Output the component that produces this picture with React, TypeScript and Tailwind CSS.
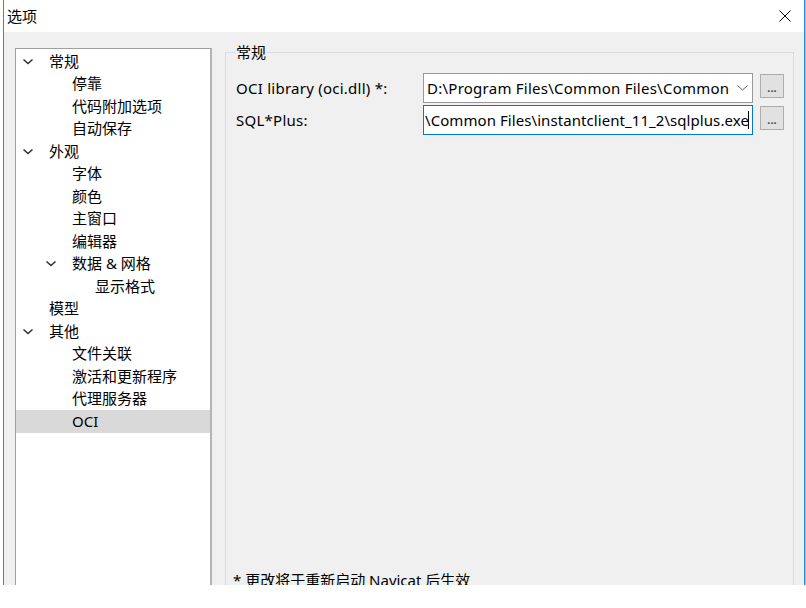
import React from "react";

type Item = { t: string; l: 0 | 1 | 2; c?: boolean; sel?: boolean };

const items: Item[] = [
  { t: "常规", l: 0, c: true },
  { t: "停靠", l: 1 },
  { t: "代码附加选项", l: 1 },
  { t: "自动保存", l: 1 },
  { t: "外观", l: 0, c: true },
  { t: "字体", l: 1 },
  { t: "颜色", l: 1 },
  { t: "主窗口", l: 1 },
  { t: "编辑器", l: 1 },
  { t: "数据 & 网格", l: 1, c: true },
  { t: "显示格式", l: 2 },
  { t: "模型", l: 0 },
  { t: "其他", l: 0, c: true },
  { t: "文件关联", l: 1 },
  { t: "激活和更新程序", l: 1 },
  { t: "代理服务器", l: 1 },
  { t: "OCI", l: 1, sel: true },
];

const pads = ["pl-[6px]", "pl-[29px]", "pl-[52px]"];

function Chevron() {
  return (
    <svg width="12" height="7" viewBox="0 0 12 7" className="block">
      <path d="M1.5 1.5 L6 5.5 L10.5 1.5" fill="none" stroke="#333" strokeWidth="1.6" />
    </svg>
  );
}

function DotsButton() {
  return (
    <div className="mt-px ml-[7px] flex h-[24px] w-[24px] items-end justify-center border border-[#adadad] bg-[#e1e1e1] pb-[4px] text-[11px] font-bold leading-none text-[#444]">
      ...
    </div>
  );
}

export default function App() {
  return (
    <div className="relative h-[608px] w-[806px] overflow-hidden bg-white font-['Noto_Sans','Noto_Sans_CJK_SC',sans-serif] text-[15px] text-black">
      <div className="ml-[3px] flex h-[585px] w-[802px] flex-col border-x border-[#2b88d8] shadow-[1px_0_0_#9cc8ee]">
        {/* title bar */}
        <div className="flex h-[32px] items-center justify-between bg-white pl-[3px] pr-[13px]">
          <span className="leading-none">选项</span>
          <svg width="12" height="12" viewBox="0 0 12 12">
            <path d="M0.5 0.5 L11.5 11.5 M11.5 0.5 L0.5 11.5" stroke="#000" strokeWidth="1" />
          </svg>
        </div>
        {/* body */}
        <div className="flex h-[553px] overflow-hidden bg-[#f0f0f0] pl-[11px] pt-[16px]">
          {/* tree */}
          <div className="h-[560px] w-[197px] shrink-0 border border-b-0 border-[#a0a0a0] border-r-2 border-r-[#b4b4b4] bg-white pt-px">
            {items.map((it) => (
              <div
                key={it.t}
                className={`flex h-[22.5px] items-center ${pads[it.l]} ${it.sel ? "bg-[#d9d9d9]" : ""}`}
              >
                <div className="flex w-[27px] shrink-0 items-center">{it.c ? <Chevron /> : null}</div>
                <span className="whitespace-nowrap leading-none">{it.t}</span>
              </div>
            ))}
          </div>
          {/* group box */}
          <div className="relative ml-[13px] mt-[4px] flex h-[545px] w-[569px] shrink-0 flex-col border border-b-0 border-[#dcdcdc]">
            <div className="absolute -top-[11px] left-[9px] bg-[#f0f0f0] px-px leading-[20px]">常规</div>
            <div className="flex flex-col gap-[2px] pl-[10px] pt-[20px]">
              <div className="flex items-start">
                <div className="flex h-[30px] w-[187px] items-center whitespace-nowrap tracking-[0.25px]">OCI library (oci.dll) *:</div>
                <div className="flex h-[30px] w-[330px] items-center overflow-hidden border border-[#999999] bg-white pl-[3px] pr-[4px]">
                  <span className="flex-1 overflow-hidden whitespace-nowrap tracking-[0.25px]">D:\Program Files\Common Files\Common</span>
                  <svg width="11" height="6" viewBox="0 0 11 6" className="ml-[4px] shrink-0">
                    <path d="M0.5 0.5 L5.5 5 L10.5 0.5" fill="none" stroke="#606060" strokeWidth="1" />
                  </svg>
                </div>
                <DotsButton />
              </div>
              <div className="flex items-start">
                <div className="flex h-[30px] w-[187px] items-center whitespace-nowrap tracking-[0.25px]">SQL*Plus:</div>
                <div className="flex h-[30px] w-[330px] items-center overflow-hidden border border-[#0078d7] bg-white pl-px">
                  <span className="whitespace-nowrap tracking-[0.07px]">\Common Files\instantclient_11_2\sqlplus.exe</span>
                  <span className="ml-[-1px] h-[18px] w-px shrink-0 bg-black" />
                </div>
                <DotsButton />
              </div>
            </div>
            <div className="mt-auto pb-[7px] pl-[7px] leading-[20px] whitespace-nowrap">* 更改将于重新启动 Navicat 后生效</div>
          </div>
        </div>
      </div>
    </div>
  );
}
